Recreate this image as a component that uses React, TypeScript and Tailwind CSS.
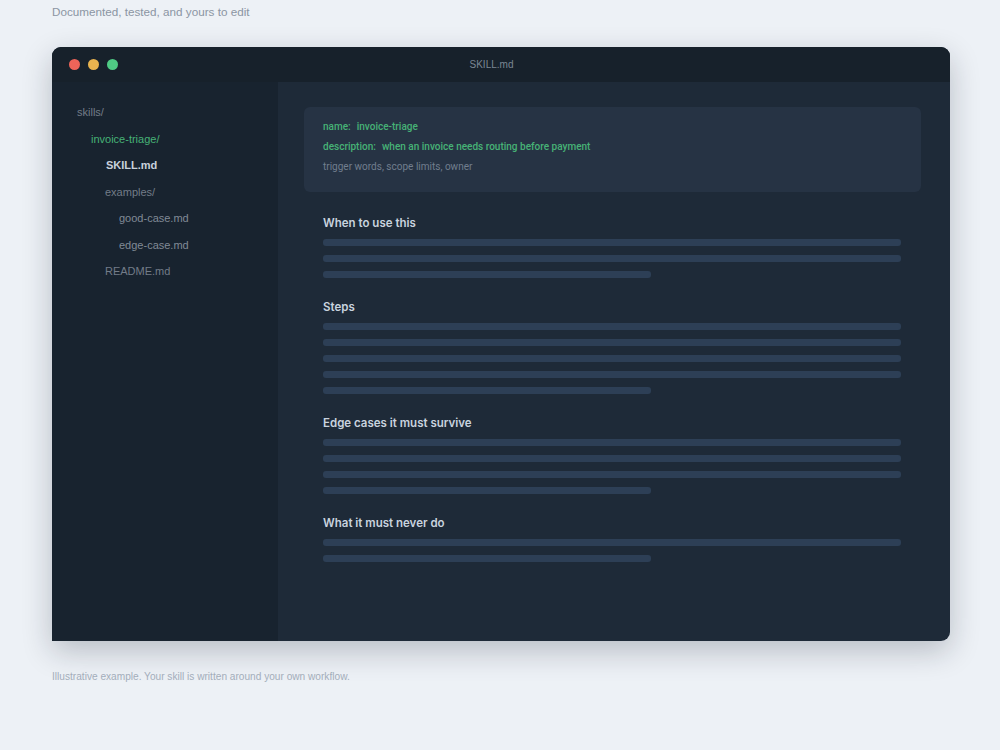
const sections = [
  { title: "When to use this", lines: 3 },
  { title: "Steps", lines: 5 },
  { title: "Edge cases it must survive", lines: 4 },
  { title: "What it must never do", lines: 2 },
];

const tree = [
  { label: "skills/", className: "pl-[25px] text-[#737c88]" },
  { label: "invoice-triage/", className: "pl-[39px] text-[#46b276]" },
  { label: "SKILL.md", className: "pl-[54px] font-bold text-[#c8d1dc]" },
  { label: "examples/", className: "pl-[53px] text-[#737c88]" },
  { label: "good-case.md", className: "pl-[67px] text-[#808a96]" },
  { label: "edge-case.md", className: "pl-[67px] text-[#808a96]" },
  { label: "README.md", className: "pl-[53px] text-[#737c88]" },
];

function Section({ title, lines }: { title: string; lines: number }) {
  return (
    <div className="mb-[20px]">
      <h3 className="font-['Inter',sans-serif] pt-[1px] text-[11.5px] leading-[16px] font-semibold text-[#c9d3df] mb-[8px]">
        {title}
      </h3>
      <div className="flex flex-col gap-[9px]">
        {Array.from({ length: lines }).map((_, i) => (
          <div
            key={i}
            className={`h-[7px] rounded-[3px] bg-[#2d3f56] ${
              i === lines - 1 ? "w-[328px]" : "w-full"
            }`}
          />
        ))}
      </div>
    </div>
  );
}

export default function App() {
  return (
    <div className="min-h-[750px] bg-[#edf1f6] font-['Liberation_Sans',sans-serif] px-[52px] pt-[4px]">
      <p className="text-[11.7px] leading-[15px] text-[#8b95a3]">
        Documented, tested, and yours to edit
      </p>

      <div className="mt-[28px] w-[898px] h-[594px] flex flex-col rounded-t-[9px] rounded-br-[9px] bg-[#1e2a38] shadow-[0_10px_30px_rgba(15,23,42,0.24)]">
        {/* Title bar */}
        <div className="relative h-[35px] shrink-0 flex items-center gap-[8px] pl-[17px] rounded-t-[9px] bg-[#17212b]">
          <span className="w-[11px] h-[11px] rounded-full bg-[#ec6459]" />
          <span className="w-[11px] h-[11px] rounded-full bg-[#e9b44f]" />
          <span className="w-[11px] h-[11px] rounded-full bg-[#4fcb84]" />
          <span className="flex-1 text-center text-[10px] text-[#7b8794] pr-[93px]">
            SKILL.md
          </span>
        </div>

        <div className="flex flex-1 min-h-0">
          {/* File tree */}
          <div className="w-[226px] shrink-0 bg-[#18232f] pt-[23px] text-[11px] leading-[15px] flex flex-col gap-[11.5px]">
            {tree.map((row) => (
              <div key={row.label} className={row.className}>
                {row.label}
              </div>
            ))}
          </div>

          {/* Document */}
          <div className="flex-1 pt-[25px] pl-[26px] pr-[29px]">
            <div className="h-[85px] rounded-[6px] bg-[#263344] pl-[19px] pt-[13px] text-[10.03px] leading-[14px] flex flex-col gap-[6px] font-['Roboto',sans-serif]">
              <p className="font-medium text-[#46b276]">
                <span>name:</span>
                <span className="ml-[6px]">invoice-triage</span>
              </p>
              <p className="font-medium text-[#46b276]">
                <span>description:</span>
                <span className="ml-[6px]">when an invoice needs routing before payment</span>
              </p>
              <p className="text-[#717e8e]">trigger words, scope limits, owner</p>
            </div>

            <div className="mt-[22px] pl-[19px] pr-[20px]">
              {sections.map((s) => (
                <Section key={s.title} title={s.title} lines={s.lines} />
              ))}
            </div>
          </div>
        </div>
      </div>

      <p className="mt-[29px] text-[10.13px] leading-[13px] text-[#a3adba]">
        Illustrative example. Your skill is written around your own workflow.
      </p>
    </div>
  );
}
